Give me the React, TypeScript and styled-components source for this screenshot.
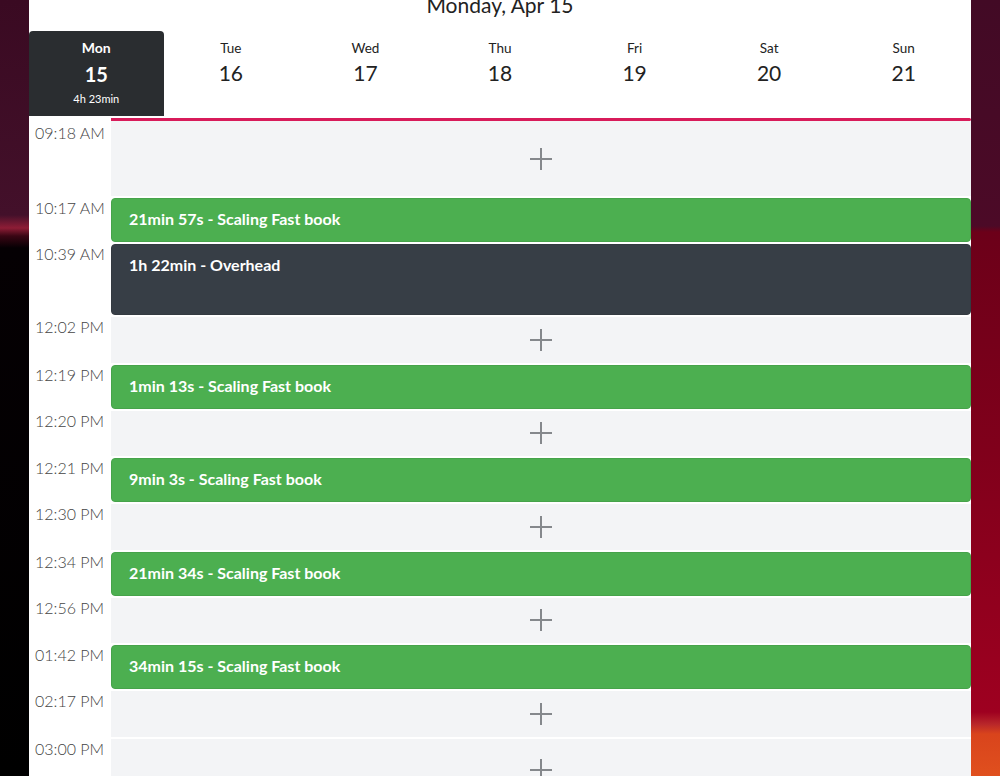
import React from 'react'
import styled, { createGlobalStyle } from 'styled-components'

const GlobalStyle = createGlobalStyle`
  html, body {
    margin: 0;
    height: 100%;
    overflow: hidden;
  }
  body {
    font-family: Lato, 'Open Sans', sans-serif;
    background:
      linear-gradient(
          to bottom,
          #3a0a22 0,
          #43102a 215px,
          #8e1d36 228px,
          #3a0614 236px,
          #050003 248px,
          #000 100%
        )
        left top / 50% 100% no-repeat,
      linear-gradient(
          to bottom,
          #420a25 0,
          #4c0a27 226px,
          #6c0019 232px,
          #80001b 450px,
          #9e0020 712px,
          #b8262a 724px,
          #d9441c 734px,
          #e0501e 100%
        )
        right top / 50% 100% no-repeat;
  }
`

const Panel = styled.div`
  width: 942px;
  min-height: 100vh;
  margin: 0 auto;
  background: #fff;
`

const Title = styled.h1`
  margin: -7px 0 14px;
  font-size: 21px;
  line-height: 24px;
  font-weight: 400;
  text-align: center;
  color: #222;
`

const WeekRow = styled.div`
  display: grid;
  grid-template-columns: repeat(7, 1fr);
  height: 85px;
`

const DayTab = styled.div<{ active?: boolean }>`
  display: flex;
  flex-direction: column;
  align-items: center;
  padding-top: 8px;
  border-radius: 4px 4px 0 0;
  background: ${p => (p.active ? '#2a2d30' : 'transparent')};
  color: ${p => (p.active ? '#fff' : '#222')};
`

const DayName = styled.div<{ active?: boolean }>`
  font-size: ${p => (p.active ? '14px' : '13.5px')};
  font-weight: ${p => (p.active ? 700 : 400)};
  line-height: 18px;
  margin-bottom: ${p => (p.active ? '4px' : '3px')};
`

const DayNumber = styled.div<{ active?: boolean }>`
  font-size: ${p => (p.active ? '20px' : '21px')};
  font-weight: ${p => (p.active ? 700 : 400)};
  line-height: 26px;
`

const DayTotal = styled.div`
  margin-top: 5px;
  font-size: 11px;
  line-height: 14px;
`

const NowLine = styled.div`
  margin: 2px 0 0 82px;
  height: 3px;
  border-radius: 0 2px 2px 0;
  background: #d81b5a;
`

const Timeline = styled.div`
  display: grid;
  grid-template-columns: 82px 1fr;
  row-gap: 2px;
`

const TimeLabel = styled.div<{ first?: boolean }>`
  padding: ${p => (p.first ? '3px' : '1px')} 0 0 6px;
  font-size: 16px;
  font-weight: 300;
  line-height: 18px;
  color: #444;
  white-space: nowrap;
`

const EmptySlot = styled.button<{ h: number }>`
  display: flex;
  align-items: center;
  justify-content: center;
  height: ${p => p.h}px;
  padding: 0;
  border: 0;
  background: #f3f4f6;
  cursor: pointer;
`

const Event = styled.div<{ h: number; kind: 'task' | 'overhead' }>`
  box-sizing: border-box;
  height: ${p => p.h}px;
  padding: 10px 17px;
  border-radius: 4px;
  border: 1px solid ${p => (p.kind === 'task' ? '#46a34a' : '#343a41')};
  background: ${p => (p.kind === 'task' ? '#4caf50' : '#373e46')};
  color: #fff;
  font-size: 16px;
  font-weight: 700;
  line-height: 20px;
`

const PlusIcon = () => (
  <svg width="22" height="22" viewBox="0 0 22 22">
    <path d="M11 0v22M0 11h22" stroke="#85888c" strokeWidth="2" fill="none" />
  </svg>
)

const days = [
  { name: 'Mon', date: 15, total: '4h 23min' },
  { name: 'Tue', date: 16 },
  { name: 'Wed', date: 17 },
  { name: 'Thu', date: 18 },
  { name: 'Fri', date: 19 },
  { name: 'Sat', date: 20 },
  { name: 'Sun', date: 21 },
]

type Row =
  | { time: string; type: 'empty'; h: number }
  | { time: string; type: 'task' | 'overhead'; h: number; label: string }

const rows: Row[] = [
  { time: '09:18 AM', type: 'empty', h: 75 },
  { time: '10:17 AM', type: 'task', h: 44, label: '21min 57s - Scaling Fast book' },
  { time: '10:39 AM', type: 'overhead', h: 71, label: '1h 22min - Overhead' },
  { time: '12:02 PM', type: 'empty', h: 45.5 },
  { time: '12:19 PM', type: 'task', h: 44, label: '1min 13s - Scaling Fast book' },
  { time: '12:20 PM', type: 'empty', h: 45.5 },
  { time: '12:21 PM', type: 'task', h: 44, label: '9min 3s - Scaling Fast book' },
  { time: '12:30 PM', type: 'empty', h: 45.5 },
  { time: '12:34 PM', type: 'task', h: 44, label: '21min 34s - Scaling Fast book' },
  { time: '12:56 PM', type: 'empty', h: 45.5 },
  { time: '01:42 PM', type: 'task', h: 44, label: '34min 15s - Scaling Fast book' },
  { time: '02:17 PM', type: 'empty', h: 45.5 },
  { time: '03:00 PM', type: 'empty', h: 62 },
]

export default function App() {
  return (
    <>
      <GlobalStyle />
      <Panel>
        <Title>Monday, Apr 15</Title>
        <WeekRow>
          {days.map((d, i) => (
            <DayTab key={d.name} active={i === 0}>
              <DayName active={i === 0}>{d.name}</DayName>
              <DayNumber active={i === 0}>{d.date}</DayNumber>
              {d.total && <DayTotal>{d.total}</DayTotal>}
            </DayTab>
          ))}
        </WeekRow>
        <NowLine />
        <Timeline>
          {rows.map((r, i) => (
            <React.Fragment key={r.time}>
              <TimeLabel first={i === 0}>{r.time}</TimeLabel>
              {r.type === 'empty' ? (
                <EmptySlot h={r.h} aria-label="Add entry">
                  <PlusIcon />
                </EmptySlot>
              ) : (
                <Event h={r.h} kind={r.type}>
                  {r.label}
                </Event>
              )}
            </React.Fragment>
          ))}
        </Timeline>
      </Panel>
    </>
  )
}
